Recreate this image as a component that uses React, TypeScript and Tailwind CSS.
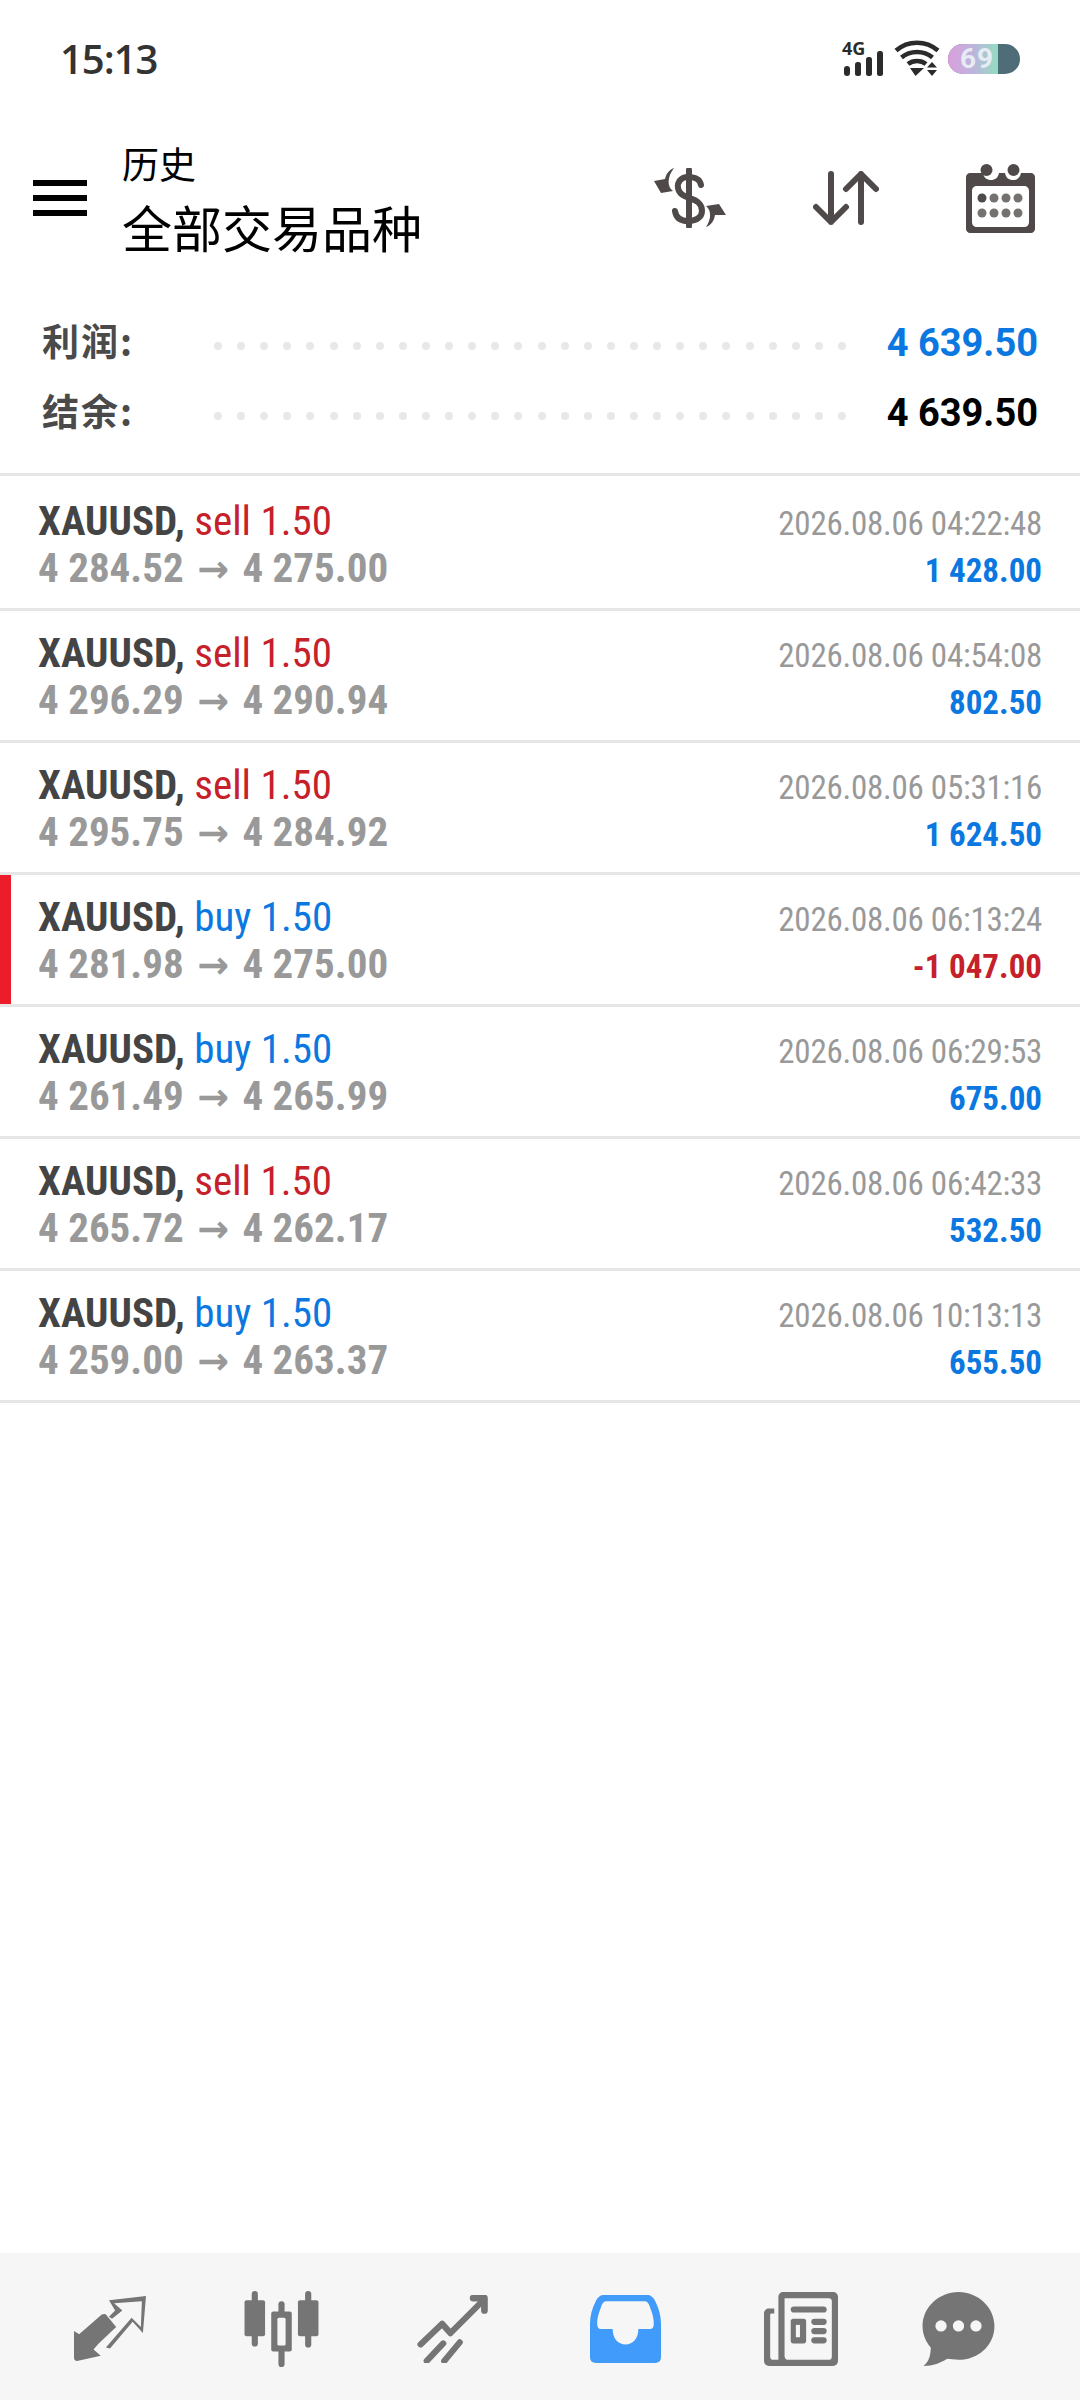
import type { ReactNode } from "react";

type Trade = {
  side: "buy" | "sell";
  from: string;
  to: string;
  time: string;
  profit: string;
};

const trades: Trade[] = [
  { side: "sell", from: "4 284.52", to: "4 275.00", time: "2026.08.06 04:22:48", profit: "1 428.00" },
  { side: "sell", from: "4 296.29", to: "4 290.94", time: "2026.08.06 04:54:08", profit: "802.50" },
  { side: "sell", from: "4 295.75", to: "4 284.92", time: "2026.08.06 05:31:16", profit: "1 624.50" },
  { side: "buy", from: "4 281.98", to: "4 275.00", time: "2026.08.06 06:13:24", profit: "-1 047.00" },
  { side: "buy", from: "4 261.49", to: "4 265.99", time: "2026.08.06 06:29:53", profit: "675.00" },
  { side: "sell", from: "4 265.72", to: "4 262.17", time: "2026.08.06 06:42:33", profit: "532.50" },
  { side: "buy", from: "4 259.00", to: "4 263.37", time: "2026.08.06 10:13:13", profit: "655.50" },
];

function StatusBar() {
  return (
    <div className="flex h-[118px] items-center pl-[60px] pr-[60px]">
      <span className="font-['Open_Sans',sans-serif] text-[40px] font-semibold leading-none tracking-[-1px] text-[#333]">15:13</span>
      <div className="ml-auto flex items-center">
        <svg width="42" height="38" viewBox="0 0 42 38" className="overflow-visible text-[#2b2b2b]">
          <text x="0" y="15" fontSize="18" fontWeight="700" fontFamily="'Open Sans', sans-serif" fill="currentColor">4G</text>
          <rect x="2" y="26" width="6" height="10" rx="3" fill="currentColor" />
          <rect x="13" y="22" width="6" height="14" rx="2.5" fill="currentColor" />
          <rect x="24" y="17" width="6" height="19" rx="2.5" fill="currentColor" />
          <rect x="35" y="11" width="6" height="25" rx="2.5" fill="currentColor" />
        </svg>
        <svg width="46" height="38" viewBox="0 0 46 38" fill="none" className="ml-[10px] text-[#2b2b2b]">
          <path d="M2 10.500 C14 0 32 0 44 10.500" stroke="currentColor" strokeWidth="4.500" />
          <path d="M7.500 17.500 C16 10 30 10 38.500 17.500" stroke="currentColor" strokeWidth="4.500" />
          <path d="M14 24 C19 20 27 20 32 24" stroke="currentColor" strokeWidth="4.500" />
          <path d="M16 28 H30 L21.500 36 Z M33 27.500 L38 22 L43 27.500 Z M33 30 H43 L38 36 Z" fill="currentColor" />
        </svg>
        <div className="ml-[8px] flex h-[30px] w-[72px] rounded-full bg-[#4f6d78]">
          <div className="flex h-[30px] w-[50px] items-center justify-center rounded-l-full bg-gradient-to-r from-[#dc9ede] via-[#bcb4dc] to-[#90dcc0] pl-[8px] font-['Roboto',sans-serif] text-[28px] font-bold leading-none tracking-[1px] text-[#e6ecf4]">
            69
          </div>
        </div>
      </div>
    </div>
  );
}

function DollarIcon() {
  return (
    <svg width="72" height="60" viewBox="0 0 72 60" fill="none" className="text-[#4f4a49]">
      <path d="M35 2 V58" stroke="currentColor" strokeWidth="6" strokeLinecap="round" />
      <path d="M47 17 C46 11 40 9 34 9 C27 9 23 14 24 20 C25 26 30 28 35 30 C42 32 48 35 48 43 C48 50 41 53 34 53 C27 53 22 50 21 43" stroke="currentColor" strokeWidth="6" strokeLinecap="round" />
      <path d="M20 0 C15 2 12 6 11 11 L0 13 L7 25 L19 23 C13 19 13 9 20 0 Z" fill="currentColor" />
      <path d="M52 59 C57 57 60 53 61 47 L72 47 L65 36 L52 38 C57 42 58 50 52 59 Z" fill="currentColor" />
    </svg>
  );
}

function SortIcon() {
  return (
    <svg width="66" height="54" viewBox="0 0 66 54" fill="none" stroke="#4f4a49" strokeWidth="6" strokeLinecap="round" strokeLinejoin="round">
      <path d="M18 3 V51 M3 36 L18 51 L33 36" />
      <path d="M48 51 V3 M33 18 L48 3 L63 18" />
    </svg>
  );
}

function CalendarIcon() {
  return (
    <svg width="69" height="69" viewBox="0 0 69 69" className="text-[#4f4a49]">
      <path d="M4 9 H17 C18 14 21 16 25 16 C29 16 32 14 33 9 H39 C40 14 43 16 47 16 C51 16 54 14 55 9 H65 C67 9 69 11 69 13 V65 C69 67 67 69 65 69 H4 C2 69 0 67 0 65 V13 C0 11 2 9 4 9 Z M11 22 C8 22 6 24 6 27 V58 C6 61 8 63 11 63 H58 C61 63 63 61 63 58 V27 C63 24 61 22 58 22 Z" fill="currentColor" fillRule="evenodd" />
      <circle cx="20.500" cy="6" r="6" fill="currentColor" />
      <circle cx="47.500" cy="6" r="6" fill="currentColor" />
      <circle cx="16" cy="34" r="4.500" fill="currentColor" />
      {[28, 40, 52].map((x) => (
        <circle key={x} cx={x} cy="34" r="4.500" fill="#757170" />
      ))}
      {[16, 28, 40, 52].map((x) => (
        <circle key={x} cx={x} cy="49" r="4.500" fill="#757170" />
      ))}
    </svg>
  );
}

function Header() {
  return (
    <div className="mt-[17px] flex h-[126px] items-center">
      <div className="ml-[33px] flex w-[54px] flex-col gap-[9px]">
        <div className="h-[6px] bg-black" />
        <div className="h-[6px] bg-black" />
        <div className="h-[6px] bg-black" />
      </div>
      <div className="ml-[35px] text-black">
        <div className="text-[37px] leading-[56px]">历史</div>
        <div className="text-[50px] leading-[70px]">全部交易品种</div>
      </div>
      <div className="ml-auto flex items-center pr-[45px]">
        <DollarIcon />
        <div className="ml-[87px]"><SortIcon /></div>
        <div className="ml-[87px]"><CalendarIcon /></div>
      </div>
    </div>
  );
}

function SummaryRow({ label, value, valueClass }: { label: string; value: string; valueClass: string }) {
  return (
    <div className="flex h-[70px] items-center pl-[42px] pr-[42px]">
      <span className="mb-[4px] w-[172px] text-[37px] font-bold tracking-[2px] text-[#4a4a4a]">{label}</span>
      <div className="mt-[6px] flex w-[632px] justify-between">
        {Array.from({ length: 28 }, (_, i) => (
          <span key={i} className="h-[8px] w-[8px] rounded-full bg-[#e8e8e8]" />
        ))}
      </div>
      <span className={`ml-auto font-['Roboto',sans-serif] text-[38px] font-bold leading-none ${valueClass}`}>{value}</span>
    </div>
  );
}

function Condensed({ children, className }: { children: ReactNode; className?: string }) {
  return <span className={`font-['Roboto',sans-serif] [font-stretch:75%] ${className ?? ""}`}>{children}</span>;
}

function TradeRow({ trade, first }: { trade: Trade; first: boolean }) {
  const loss = trade.profit.startsWith("-");
  return (
    <div className={`relative flex border-b-[3px] border-[#e6e6e6] pl-[38px] pr-[38px] ${first ? "h-[135px] pt-[18px]" : "h-[132px] pt-[15px]"}`}>
      {loss && <div className="absolute bottom-0 left-0 top-0 w-[11px] bg-[#ec1c2a]" />}
      <div className="flex flex-col">
        <div className="h-[47px] text-[41px] leading-[47px]">
          <Condensed className="font-bold text-[#444]">XAUUSD, </Condensed>
          <Condensed className={trade.side === "sell" ? "text-[#c6202a]" : "text-[#0a78e0]"}>
            {trade.side} 1.50
          </Condensed>
        </div>
        <div className="h-[47px] text-[41px] leading-[47px]">
          <Condensed className="font-bold text-[#999]">
            {trade.from}{" "}
            <span className="mx-[4px] font-['DejaVu_Sans',sans-serif] text-[38px] font-bold [font-stretch:normal]">→</span>{" "}
            {trade.to}
          </Condensed>
        </div>
      </div>
      <div className="ml-auto flex flex-col items-end">
        <div className="h-[49px] pt-[3px] text-[33px] leading-[48px] tracking-[-0.25px]">
          <Condensed className="text-[#999]">{trade.time}</Condensed>
        </div>
        <div className="h-[46px] pt-[2px] text-[33px] leading-[46px]">
          <Condensed className={`font-bold ${loss ? "text-[#c6202a]" : "text-[#0a78e0]"}`}>{trade.profit}</Condensed>
        </div>
      </div>
    </div>
  );
}

function BottomNav() {
  return (
    <div className="mt-auto flex h-[147px] items-center bg-[#f6f6f6] pt-[4px]">
      <svg width="72" height="66" viewBox="0 0 70 64" className="ml-[74px] text-[#757575]">
        <path d="M0 34 L5 37 L27 18 C29 17 31 17 32 19 L41 30 L24 46 L19 52 L26 58 L3 63 C1 63 0 62 0 60 Z" fill="currentColor" />
        <path d="M34 4 L70 0 L67 36 L57 25 L35 51 L31 50 L56 21 L65 30 L66 5 L39 7 L47 14 L37 22 L34 20 L40 14 Z" fill="currentColor" />
      </svg>
      <svg width="75" height="76" viewBox="0 0 72 74" className="ml-[98px] text-[#757575]">
        <rect x="0" y="9" width="20" height="35" rx="2" fill="currentColor" />
        <rect x="7" y="0" width="6" height="54" rx="3" fill="currentColor" />
        <rect x="52" y="9" width="20" height="35" rx="2" fill="currentColor" />
        <rect x="59" y="0" width="6" height="55" rx="3" fill="currentColor" />
        <rect x="33" y="10" width="6" height="64" rx="3" fill="currentColor" />
        <rect x="26" y="20" width="20" height="39" rx="2" fill="currentColor" />
        <rect x="32" y="26" width="8" height="27" rx="1.500" fill="#f6f6f6" />
      </svg>
      <svg width="71" height="68" viewBox="0 0 68 66" fill="none" stroke="#757575" strokeLinecap="round" strokeLinejoin="round" className="ml-[98px]">
        <path d="M3 48 L24 28 L32 37 L64 5" strokeWidth="6" />
        <path d="M54 3 H65 V15" strokeWidth="6.500" />
        <path d="M9 64 L25 47 M26 64 L41 46" strokeWidth="6" />
      </svg>
      <svg width="71" height="68" viewBox="0 0 69 66" className="ml-[102px]">
        <path d="M13 0 H56 C59 0 61 2 63 5 C67 13 69 20 69 28 V60 C69 64 67 66 63 66 H6 C2 66 0 64 0 60 V28 C0 20 2 13 6 5 C8 2 10 0 13 0 Z M17 6 C13 6 12 8 11 11 C9 17 7 21 7 28 C7 31 8 33 10 33 H22 C22 42 27 48 34.500 48 C42 48 47 42 47 33 H59 C61 33 62 31 62 28 C62 21 60 17 58 11 C57 8 56 6 52 6 Z" fill="#419bfa" fillRule="evenodd" />
      </svg>
      <svg width="74" height="74" viewBox="0 0 72 72" className="ml-[103px] text-[#757575]">
        <path d="M19 0 H67 C70 0 72 2 72 5 V67 C72 70 70 72 67 72 H5 C2 72 0 70 0 67 V21 C0 18 2 16 5 16 H10 V21 H7 C6 21 6 22 6 23 V63 C6 65 7 66 9 66 H14 V5 C14 2 16 0 19 0 Z M20 6 V62 C20 64 21 66 23 66 H63 C65 66 66 65 66 63 V9 C66 7 65 6 63 6 Z" fill="currentColor" fillRule="evenodd" />
        <rect x="26" y="14" width="35" height="6" rx="3" fill="currentColor" />
        <rect x="26" y="26" width="15" height="24" rx="2.500" fill="currentColor" />
        <rect x="31" y="32" width="4" height="12" fill="#f6f6f6" />
        <rect x="46" y="26" width="15" height="6" rx="3" fill="currentColor" />
        <rect x="46" y="35" width="15" height="6" rx="3" fill="currentColor" />
        <rect x="46" y="44" width="15" height="6" rx="3" fill="currentColor" />
      </svg>
      <svg width="73" height="74" viewBox="0 0 70 72" className="ml-[84px]">
        <path d="M35 0 C54 0 70 15 70 33 C70 52 54 66 35 66 C31 66 27 65 24 65 C18 69 10 72 1 72 C6 68 8 62 8 54 C3 48 0 41 0 33 C0 15 16 0 35 0 Z" fill="#757575" />
        <circle cx="18" cy="33" r="5.500" fill="#f6f6f6" />
        <circle cx="35" cy="33" r="5.500" fill="#f6f6f6" />
        <circle cx="52" cy="33" r="5.500" fill="#f6f6f6" />
      </svg>
    </div>
  );
}

export default function App() {
  return (
    <div className="flex h-[2400px] w-[1080px] flex-col overflow-hidden bg-white font-['Noto_Sans_CJK_SC','Noto_Sans',sans-serif]">
      <StatusBar />
      <Header />
      <div className="pt-[47px]">
        <SummaryRow label="利润:" value="4 639.50" valueClass="text-[#0a78e0]" />
        <SummaryRow label="结余:" value="4 639.50" valueClass="text-black" />
      </div>
      <div className="mt-[25px] border-t-[3px] border-[#e6e6e6]">
        {trades.map((trade, i) => (
          <TradeRow key={trade.time} trade={trade} first={i === 0} />
        ))}
      </div>
      <BottomNav />
    </div>
  );
}
